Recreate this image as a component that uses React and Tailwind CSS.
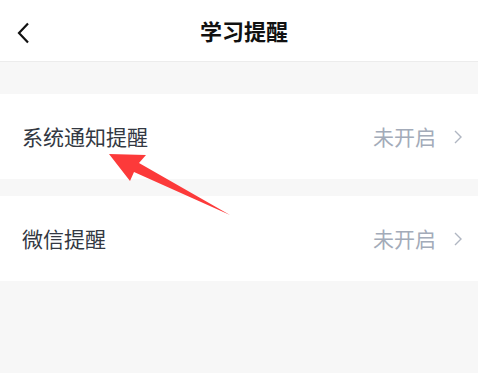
export default function App() {
  const font = { fontFamily: '"Noto Sans CJK SC", "Noto Sans", sans-serif' };
  const Row = ({ label }) => (
    <div className="flex h-[85px] items-center justify-between bg-white pl-[22px] pr-[16px]">
      <span className="text-[21px] text-[#333842]">{label}</span>
      <div className="flex items-center gap-[18px]">
        <span className="text-[21px] text-[#a3abb9]">未开启</span>
        <svg width="8" height="14" viewBox="0 0 8 14" fill="none">
          <path d="M1 1l6 6-6 6" stroke="#b0b6c2" strokeWidth="1.4" />
        </svg>
      </div>
    </div>
  );
  return (
    <div className="relative h-[373px] w-[478px] overflow-hidden bg-[#f7f7f7]" style={font}>
      <div className="relative flex h-[62px] items-center justify-center border-b border-[#ececec] bg-white">
        <svg className="absolute left-[17px] top-[22px]" width="14" height="22" viewBox="0 0 14 22" fill="none">
          <path d="M11 1.5L2 11l9 9.5" stroke="#111" strokeWidth="2.2" />
        </svg>
        <span className="ml-[10px] text-[22px] font-bold text-[#111]">学习提醒</span>
      </div>
      <div className="mt-[32px]">
        <Row label="系统通知提醒" />
      </div>
      <div className="mt-[17px]">
        <Row label="微信提醒" />
      </div>
      <svg className="absolute left-0 top-0" width="478" height="373" viewBox="0 0 478 373">
        <polygon points="109,154 146,155 139,163 230,215 134,172 130,181" fill="#fc3a3a" />
      </svg>
    </div>
  );
}
